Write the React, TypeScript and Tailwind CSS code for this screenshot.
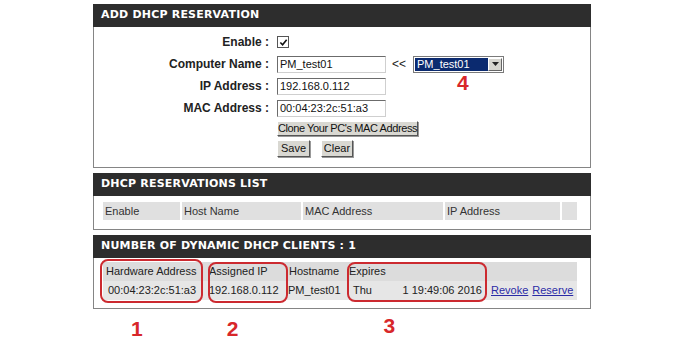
import type { ReactNode } from 'react'

function Panel({ title, children }: { title: string; children: ReactNode }) {
  return (
    <div className="w-[498px]">
      <div className="flex h-[23px] items-center bg-[#2d2d2d] pl-[8px] font-['DejaVu_Sans',Verdana,sans-serif] text-[11px] font-bold tracking-[0.2px] text-white">
        {title}
      </div>
      <div className="border-x border-b border-[#858585] bg-white">{children}</div>
    </div>
  )
}

function Field({ label, children }: { label: string; children: ReactNode }) {
  return (
    <div className="flex h-[18px] items-center">
      <div className="w-[176px] pr-[1px] text-right text-[12px] font-bold text-[#222]">{label}</div>
      <div className="ml-[7px] flex items-center">{children}</div>
    </div>
  )
}

function TextBox({ value }: { value: string }) {
  return (
    <div className="flex h-[17px] w-[109px] items-center border border-t-[#6b6b6b] border-l-[#6b6b6b] border-r-[#cfcfcf] border-b-[#cfcfcf] bg-white pl-[2px] text-[11px] text-[#111]">
      {value}
    </div>
  )
}

function Button({ label, className }: { label: string; className: string }) {
  return (
    <div
      className={`flex items-center justify-center whitespace-nowrap border border-t-white border-l-white border-r-[#555] border-b-[#555] bg-[#d9d8d2] text-[#111] shadow-[1px_1px_0_#999] ${className}`}
    >
      {label}
    </div>
  )
}

function Cell({ w, children, className = '' }: { w: string; children?: ReactNode; className?: string }) {
  return <div className={`flex h-full items-center whitespace-nowrap ${w} ${className}`}>{children}</div>
}

export default function App() {
  return (
    <div className="relative h-[340px] w-[683px] overflow-hidden bg-white pl-[93px] pt-[4px] font-['Liberation_Sans',Arial,sans-serif] text-[#222]">
      <Panel title="ADD DHCP RESERVATION">
        <div className="flex flex-col gap-[4px] pb-[10px] pt-[6px]">
          <Field label="Enable :">
            <span className="flex h-[12px] w-[12px] items-center justify-center border border-[#555] bg-white">
              <svg viewBox="0 0 10 10" className="h-[9px] w-[9px]">
                <path d="M1.5 5 L4 7.5 L8.5 2" fill="none" stroke="#111" strokeWidth="1.8" />
              </svg>
            </span>
          </Field>
          <Field label="Computer Name :">
            <TextBox value="PM_test01" />
            <span className="ml-[6px] text-[12px]">&lt;&lt;</span>
            <div className="ml-[7px] flex h-[17px] w-[91px] items-center border border-[#7a7a7a] bg-white p-[1px]">
              <div className="flex h-full flex-1 items-center bg-[#0b2a6f] pl-[2px] text-[11px] text-white">PM_test01</div>
              <div className="flex h-full w-[14px] items-center justify-center border border-t-white border-l-white border-r-[#666] border-b-[#666] bg-[#d6d5cf]">
                <svg viewBox="0 0 7 4" className="h-[4px] w-[7px]">
                  <path d="M0 0 H7 L3.5 4 Z" fill="#222" />
                </svg>
              </div>
            </div>
          </Field>
          <Field label="IP Address :">
            <TextBox value="192.168.0.112" />
          </Field>
          <Field label="MAC Address :">
            <TextBox value="00:04:23:2c:51:a3" />
          </Field>
          <div className="ml-[183px] flex flex-col gap-[4px]">
            <Button label="Clone Your PC's MAC Address" className="h-[15px] w-[141px] text-[11px] tracking-[-0.4px]" />
            <div className="flex gap-[11px]">
              <Button label="Save" className="h-[17px] w-[33px] text-[11px]" />
              <Button label="Clear" className="h-[17px] w-[32px] text-[11px]" />
            </div>
          </div>
        </div>
      </Panel>

      <div className="mt-[5px]">
        <Panel title="DHCP RESERVATIONS LIST">
          <div className="pb-[9px] pl-[9px] pt-[6px]">
            <div className="flex h-[18px] gap-[2px] text-[11px] text-[#333]">
              <Cell w="w-[77px]" className="bg-[#e0e0e0] pl-[2px]">Enable</Cell>
              <Cell w="w-[119px]" className="bg-[#e0e0e0] pl-[2px]">Host Name</Cell>
              <Cell w="w-[140px]" className="bg-[#e0e0e0] pl-[2px]">MAC Address</Cell>
              <Cell w="w-[115px]" className="bg-[#e0e0e0] pl-[2px]">IP Address</Cell>
              <Cell w="w-[15px]" className="bg-[#e0e0e0]" />
            </div>
          </div>
        </Panel>
      </div>

      <div className="mt-[5px]">
        <Panel title="NUMBER OF DYNAMIC DHCP CLIENTS : 1">
          <div className="pb-[8px] pl-[9px] pt-[4px] text-[11px] text-[#222]">
            <div className="flex h-[19px] w-[474px] bg-[#dcdcdc]">
              <Cell w="w-[103px]" className="pl-[3px]">Hardware Address</Cell>
              <Cell w="w-[80px]" className="pl-[3px]">Assigned IP</Cell>
              <Cell w="w-[60px]" className="pl-[3px]">Hostname</Cell>
              <Cell w="w-[141px]" className="pl-[3px]">Expires</Cell>
              <Cell w="w-[90px]" />
            </div>
            <div className="flex h-[19px] w-[474px] bg-[#e6e6e6]">
              <Cell w="w-[103px]" className="pl-[5px]">00:04:23:2c:51:a3</Cell>
              <Cell w="w-[80px]" className="pl-[3px]">192.168.0.112</Cell>
              <Cell w="w-[60px]" className="pl-[2px]">PM_test01</Cell>
              <Cell w="w-[141px]" className="justify-between pl-[7px] pr-[5px]">
                <span>Thu</span>
                <span>1 19:49:06 2016</span>
              </Cell>
              <Cell w="w-[90px]" className="gap-[4px] pl-[4px] text-[#2b2ba6] underline">
                <span>Revoke</span>
                <span>Reserve</span>
              </Cell>
            </div>
          </div>
        </Panel>
      </div>

      <div className="mt-[7px] flex items-start text-[21px] font-bold leading-[18px] text-[#d8272a]">
        <span className="ml-[38px] mt-[4px]">1</span>
        <span className="ml-[84px] mt-[4px]">2</span>
        <span className="ml-[145px] mt-[1px]">3</span>
      </div>

      <span className="absolute left-[457px] top-[72px] text-[21px] font-bold leading-none text-[#d8272a]">4</span>
      <div className="absolute left-[100px] top-[259px] h-[44px] w-[103px] rounded-[8px] border-2 border-[#cc2a30]" />
      <div className="absolute left-[208px] top-[262px] h-[41px] w-[80px] rounded-[8px] border-2 border-[#cc2a30]" />
      <div className="absolute left-[347px] top-[262px] h-[40px] w-[140px] rounded-[8px] border-2 border-[#cc2a30]" />
    </div>
  )
}
